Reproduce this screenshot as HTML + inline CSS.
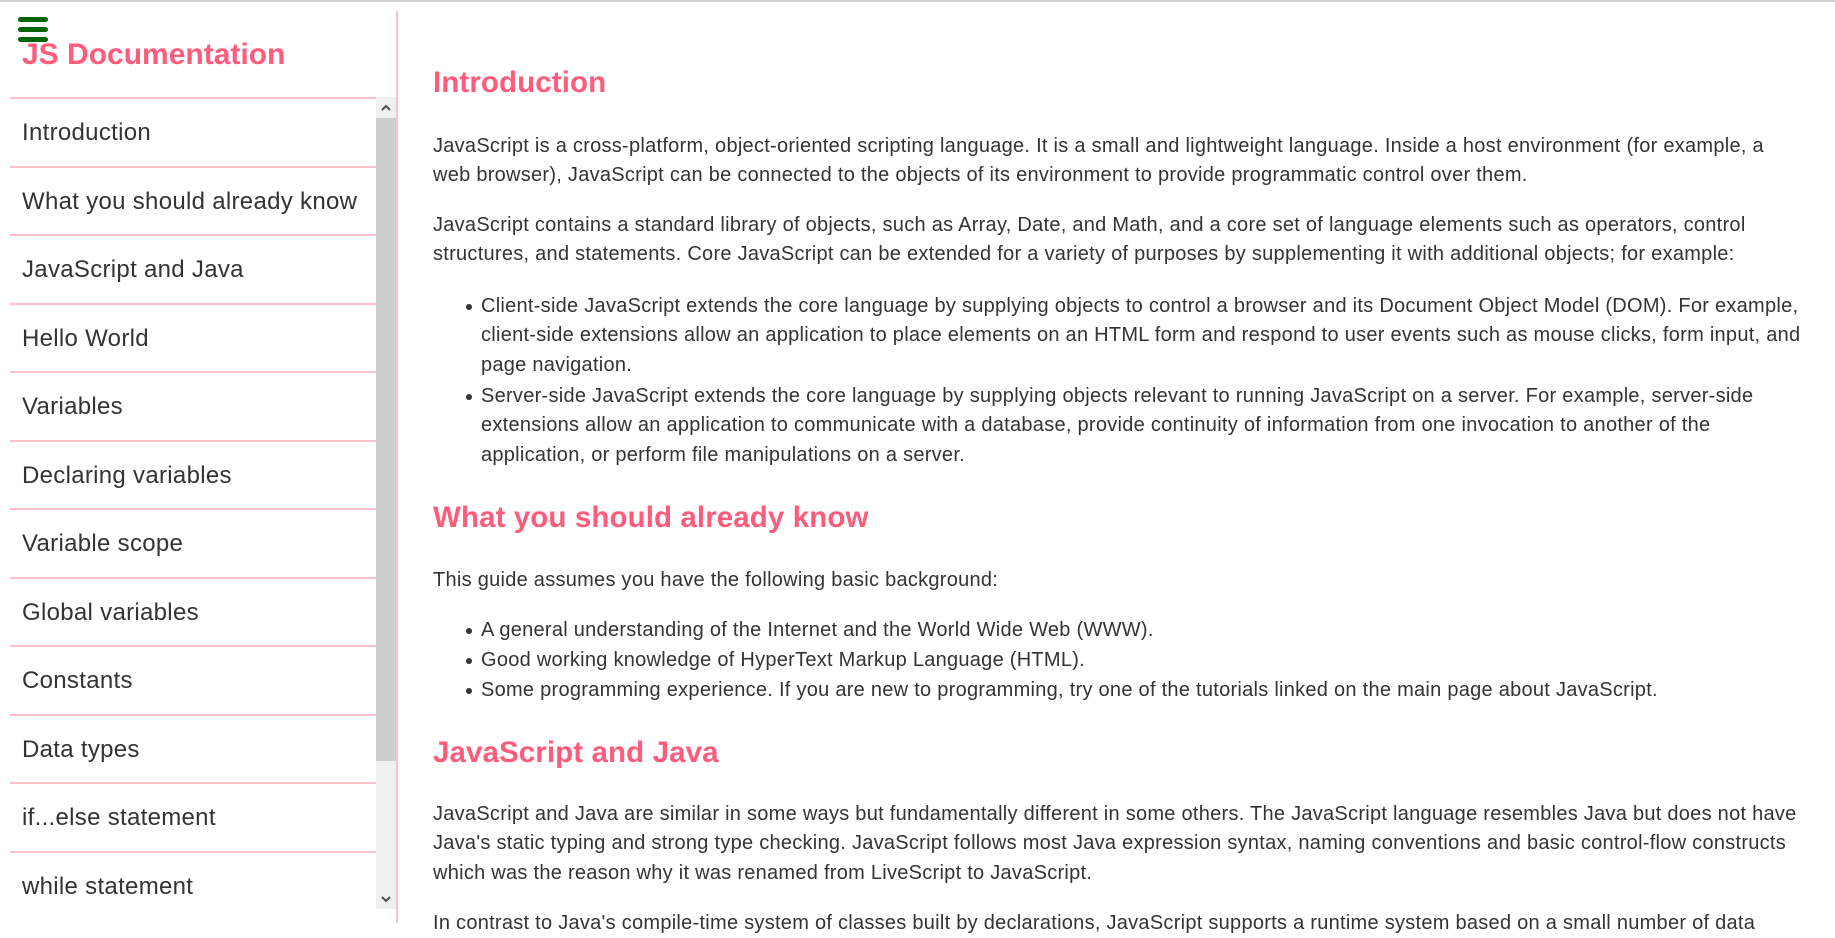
<!DOCTYPE html>
<html><head><meta charset="utf-8"><style>
*{margin:0;padding:0;box-sizing:border-box}
html,body{width:1835px;height:923px;overflow:hidden;background:#fff;font-family:"Liberation Sans",sans-serif;color:#333}
.top{position:absolute;left:0;top:0;width:1835px;height:2px;background:#d0d0d0}
.vline{position:absolute;left:396px;top:11px;width:2px;height:912px;background:#ffc0cb}
.ham{position:absolute;left:18px;width:30px;height:5px;border-radius:3px;background:#006400}
.title{position:absolute;left:22px;top:37px;font-size:30px;font-weight:bold;color:#ff5c7c;line-height:36px}
.nav{position:absolute;left:10px;top:97px;width:366px;height:812px;overflow:hidden}
.nav div{height:68.5px;border-top:2px solid #ffc0cb;font-size:24px;letter-spacing:0.3px;line-height:68px;padding-left:12px;color:#333;white-space:nowrap}
.sb{position:absolute;left:376px;top:97px;width:20px;height:812px;background:#f0f0f0}
.thumb{position:absolute;left:376px;top:118px;width:20px;height:643px;background:#cdcdcd}
.arr{position:absolute;left:376px;width:20px}
.b{position:absolute;left:433px;font-size:20px;letter-spacing:0.27px;line-height:29.3px;white-space:nowrap;color:#333}
h2{position:absolute;left:433px;font-size:29.5px;letter-spacing:0.1px;line-height:36px;color:#ff5c7c;font-weight:bold}
.li{left:481px}
.dot{position:absolute;left:-15px;top:12px;width:6px;height:6px;border-radius:50%;background:#333}
</style></head><body>
<div class="top"></div>
<div class="vline"></div>
<div class="title">JS Documentation</div>
<div class="ham" style="top:17px"></div>
<div class="ham" style="top:27px"></div>
<div class="ham" style="top:37px"></div>
<div class="nav">
<div>Introduction</div><div>What you should already know</div><div>JavaScript and Java</div><div>Hello World</div><div>Variables</div><div>Declaring variables</div><div>Variable scope</div><div>Global variables</div><div>Constants</div><div>Data types</div><div>if...else statement</div><div>while statement</div>
</div>
<div class="sb"></div><div class="thumb"></div>
<svg class="arr" style="top:98px" width="20" height="20" viewBox="0 0 20 20"><path d="M6 12 L10 8 L14 12" fill="none" stroke="#505050" stroke-width="2"/></svg>
<svg class="arr" style="top:889px" width="20" height="20" viewBox="0 0 20 20"><path d="M6 8 L10 12 L14 8" fill="none" stroke="#505050" stroke-width="2"/></svg>

<h2 style="top:65px">Introduction</h2>
<div class="b" style="top:132px">JavaScript is a cross-platform, object-oriented scripting language. It is a small and lightweight language. Inside a host environment (for example, a<br>web browser), JavaScript can be connected to the objects of its environment to provide programmatic control over them.</div>
<div class="b" style="top:211px">JavaScript contains a standard library of objects, such as Array, Date, and Math, and a core set of language elements such as operators, control<br>structures, and statements. Core JavaScript can be extended for a variety of purposes by supplementing it with additional objects; for example:</div>
<div class="b li" style="top:292px"><span class="dot"></span>Client-side JavaScript extends the core language by supplying objects to control a browser and its Document Object Model (DOM). For example,<br>client-side extensions allow an application to place elements on an HTML form and respond to user events such as mouse clicks, form input, and<br>page navigation.</div>
<div class="b li" style="top:382px"><span class="dot"></span>Server-side JavaScript extends the core language by supplying objects relevant to running JavaScript on a server. For example, server-side<br>extensions allow an application to communicate with a database, provide continuity of information from one invocation to another of the<br>application, or perform file manipulations on a server.</div>

<h2 style="top:500px">What you should already know</h2>
<div class="b" style="top:566px">This guide assumes you have the following basic background:</div>
<div class="b li" style="top:616px"><span class="dot"></span>A general understanding of the Internet and the World Wide Web (WWW).</div>
<div class="b li" style="top:646px"><span class="dot"></span>Good working knowledge of HyperText Markup Language (HTML).</div>
<div class="b li" style="top:676px"><span class="dot"></span>Some programming experience. If you are new to programming, try one of the tutorials linked on the main page about JavaScript.</div>

<h2 style="top:735px">JavaScript and Java</h2>
<div class="b" style="top:800px">JavaScript and Java are similar in some ways but fundamentally different in some others. The JavaScript language resembles Java but does not have<br>Java's static typing and strong type checking. JavaScript follows most Java expression syntax, naming conventions and basic control-flow constructs<br>which was the reason why it was renamed from LiveScript to JavaScript.</div>
<div class="b" style="top:909px">In contrast to Java's compile-time system of classes built by declarations, JavaScript supports a runtime system based on a small number of data</div>
</body></html>
